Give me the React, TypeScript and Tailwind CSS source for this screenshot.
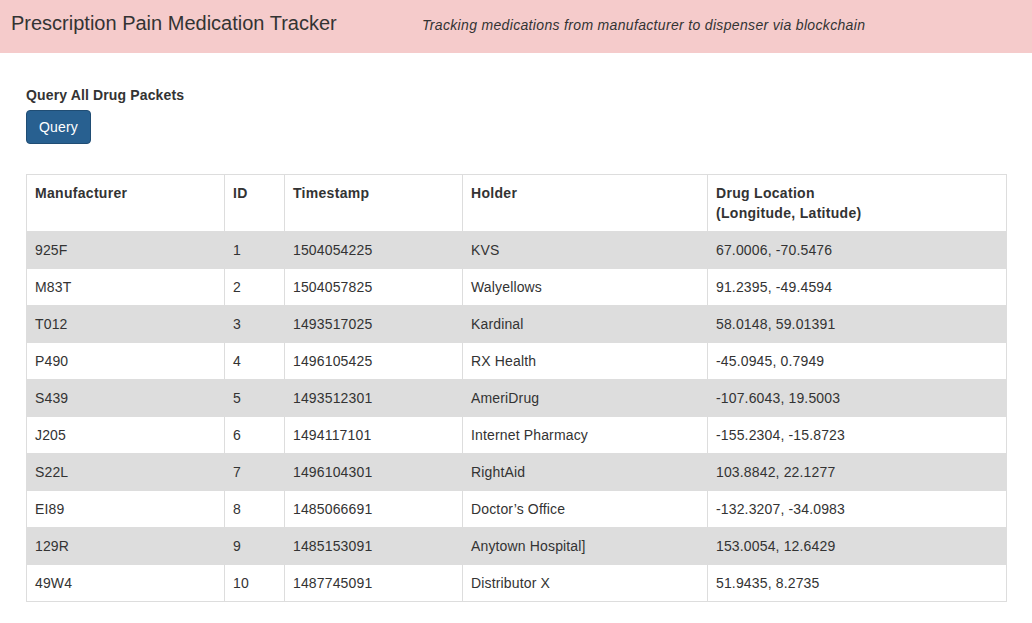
import React from 'react';

type Packet = {
  manufacturer: string;
  id: number;
  timestamp: number;
  holder: string;
  location: string;
};

const packets: Packet[] = [
  { manufacturer: '925F', id: 1, timestamp: 1504054225, holder: 'KVS', location: '67.0006, -70.5476' },
  { manufacturer: 'M83T', id: 2, timestamp: 1504057825, holder: 'Walyellows', location: '91.2395, -49.4594' },
  { manufacturer: 'T012', id: 3, timestamp: 1493517025, holder: 'Kardinal', location: '58.0148, 59.01391' },
  { manufacturer: 'P490', id: 4, timestamp: 1496105425, holder: 'RX Health', location: '-45.0945, 0.7949' },
  { manufacturer: 'S439', id: 5, timestamp: 1493512301, holder: 'AmeriDrug', location: '-107.6043, 19.5003' },
  { manufacturer: 'J205', id: 6, timestamp: 1494117101, holder: 'Internet Pharmacy', location: '-155.2304, -15.8723' },
  { manufacturer: 'S22L', id: 7, timestamp: 1496104301, holder: 'RightAid', location: '103.8842, 22.1277' },
  { manufacturer: 'EI89', id: 8, timestamp: 1485066691, holder: 'Doctor\u2019s Office', location: '-132.3207, -34.0983' },
  { manufacturer: '129R', id: 9, timestamp: 1485153091, holder: 'Anytown Hospital]', location: '153.0054, 12.6429' },
  { manufacturer: '49W4', id: 10, timestamp: 1487745091, holder: 'Distributor X', location: '51.9435, 8.2735' },
];

const th = 'border border-[#ddd] px-2 py-2 text-left align-top font-bold leading-5 tracking-[0.3px]';
const td = 'border border-[#ddd] px-2 py-2 leading-5 tracking-[0.15px]';

const App: React.FC = () => {
  return (
    <div className="min-h-[623px] bg-white text-[14px] text-[#333] font-['Liberation_Sans',Arial,sans-serif]">
      {/* Header */}
      <div className="flex h-[53px] items-baseline bg-[#f5cbcb] pt-[9px]">
        <h1 className="w-[422px] pl-[11px] text-[20px] leading-[28px] font-normal">
          Prescription Pain Medication Tracker
        </h1>
        <p className="text-[14px] italic leading-5 tracking-[0.33px]">
          Tracking medications from manufacturer to dispenser via blockchain
        </p>
      </div>

      <div className="px-[26px] pt-[32px]">
        <label className="mb-[5px] block font-bold leading-5 tracking-[0.14px]">Query All Drug Packets</label>
        <button className="h-[34px] rounded-[4px] border border-[#204d74] bg-[#286090] px-3 leading-5 text-white tracking-[0.15px]">
          Query
        </button>

        <table className="mt-[30px] w-[981px] table-fixed border-collapse border border-[#ddd]">
          <thead>
            <tr>
              <th className={`${th} w-[198px]`}>Manufacturer</th>
              <th className={`${th} w-[60px]`}>ID</th>
              <th className={`${th} w-[178px]`}>Timestamp</th>
              <th className={`${th} w-[245px]`}>Holder</th>
              <th className={th}>
                Drug Location
                <br />
                (Longitude, Latitude)
              </th>
            </tr>
          </thead>
          <tbody>
            {packets.map((p, i) => (
              <tr key={p.id} className={i % 2 === 0 ? 'bg-[#ddd]' : 'bg-white'}>
                <td className={td}>{p.manufacturer}</td>
                <td className={td}>{p.id}</td>
                <td className={td}>{p.timestamp}</td>
                <td className={td}>{p.holder}</td>
                <td className={td}>{p.location}</td>
              </tr>
            ))}
          </tbody>
        </table>
      </div>
    </div>
  );
};

export default App;
